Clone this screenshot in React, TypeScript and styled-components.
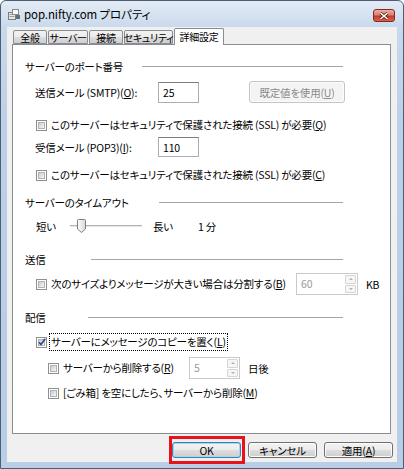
import styled, { createGlobalStyle } from "styled-components"

const GlobalStyle = createGlobalStyle`
  html, body {
    margin: 0;
    padding: 0;
    background: #ffffff;
  }
  body {
    font-family: "Noto Sans CJK JP", "Noto Sans", sans-serif;
    font-size: 10.5px;
    letter-spacing: -0.2px;
    font-feature-settings: "palt";
    color: #000;
  }
`

const Window = styled.div`
  width: 404px;
  height: 469px;
  box-sizing: border-box;
  border: 1px solid #4d5d74;
  border-radius: 6px 6px 0 0;
  background: linear-gradient(180deg, #e4ecf6 0px, #c9d9ec 26px, #bcd0e7 120px, #b8cde6 100%);
  display: flex;
  flex-direction: column;
  padding: 0 6px 6px 6px;
  overflow: hidden;
`

const TitleBar = styled.div`
  height: 26px;
  display: flex;
  align-items: center;
  padding-left: 1px;
`

const TitleIcon = styled.svg`
  width: 13px;
  height: 11px;
  flex-shrink: 0;
`

const TitleText = styled.span`
  margin-left: 3px;
  font-size: 11.5px;
  letter-spacing: -0.1px;
  color: #000;
  flex: 1;
`

const CloseButton = styled.div`
  align-self: flex-start;
  margin-top: 8px;
  margin-right: 2px;
  width: 22px;
  height: 13px;
  box-sizing: border-box;
  border: 1px solid #7b2c24;
  border-radius: 3px;
  background: linear-gradient(180deg, #eeaea2 0%, #dc7f70 45%, #c43b2a 55%, #d9634d 100%);
  display: flex;
  align-items: center;
  justify-content: center;
`

const Client = styled.div`
  flex: 1;
  background: #f0f0f0;
  display: flex;
  flex-direction: column;
  padding: 1px 5px 0 5px;
`

const TabStrip = styled.div`
  height: 17px;
  display: flex;
  align-items: flex-end;
  margin-left: 1px;
  margin-bottom: -1px;
  position: relative;
  z-index: 1;
`

const Tab = styled.div<{ $w: number; $active?: boolean }>`
  width: ${(p) => p.$w}px;
  box-sizing: border-box;
  height: ${(p) => (p.$active ? 17 : 14)}px;
  margin-bottom: ${(p) => (p.$active ? 0 : 1)}px;
  margin-right: ${(p) => (p.$active ? 0 : 1)}px;
  border: 1px solid #898c95;
  border-bottom: ${(p) => (p.$active ? "none" : "1px solid #898c95")};
  border-radius: 2px 2px 0 0;
  background: ${(p) =>
    p.$active ? "#ffffff" : "linear-gradient(180deg, #f2f2f2 0%, #ebebeb 50%, #dddddd 51%, #cfcfcf 100%)"};
  display: flex;
  align-items: center;
  justify-content: center;
  white-space: nowrap;
  font-size: 10px;
  letter-spacing: -0.3px;
  padding-bottom: ${(p) => (p.$active ? 1 : 0)}px;
`

const Panel = styled.div`
  width: 379px;
  height: 390px;
  box-sizing: border-box;
  border: 1px solid #898c95;
  background: #ffffff;
  padding: 14px 0 0 12px;
  display: flex;
  flex-direction: column;
`

const SectionHead = styled.div<{ $mt: number; $lineAt: number }>`
  margin-top: ${(p) => p.$mt}px;
  width: 318px;
  height: 14px;
  display: grid;
  grid-template-columns: ${(p) => p.$lineAt - 25}px 1fr;
  align-items: center;
`

const HeadLabel = styled.span`
  white-space: nowrap;
`

const Rule = styled.div`
  height: 1px;
  background: #a6a6a6;
  border-bottom: 1px solid #ffffff;
`

const Row = styled.div<{ $mt: number; $h: number; $indent: number }>`
  margin-top: ${(p) => p.$mt}px;
  height: ${(p) => p.$h}px;
  padding-left: ${(p) => p.$indent}px;
  display: flex;
  align-items: center;
  white-space: nowrap;
`

const FieldLabel = styled.span<{ $w: number }>`
  width: ${(p) => p.$w}px;
  flex-shrink: 0;
`

const TextBox = styled.div<{ $w: number; $h: number }>`
  width: ${(p) => p.$w}px;
  height: ${(p) => p.$h}px;
  box-sizing: border-box;
  border: 1px solid #abadb3;
  border-top-color: #7a7c82;
  background: #ffffff;
  padding-left: 4px;
  display: flex;
  align-items: center;
`

const PushButton = styled.div<{ $w: number; $h: number; $disabled?: boolean; $default?: boolean }>`
  width: ${(p) => p.$w}px;
  height: ${(p) => p.$h}px;
  box-sizing: border-box;
  border-radius: 3px;
  border: 1px solid ${(p) => (p.$disabled ? "#c2c4c6" : p.$default ? "#3c7fb1" : "#707070")};
  background: ${(p) =>
    p.$disabled
      ? "#f4f4f4"
      : "linear-gradient(180deg, #f3f3f3 0%, #ebebeb 50%, #dddddd 51%, #cfcfcf 100%)"};
  box-shadow: ${(p) => (p.$default ? "inset 0 0 0 1px #a8d3f1" : "inset 0 0 0 1px #fcfcfc")};
  color: ${(p) => (p.$disabled ? "#8a8a8a" : "#000")};
  display: flex;
  align-items: center;
  justify-content: center;
  flex-shrink: 0;
  position: relative;
`

const Highlight = styled.div`
  position: absolute;
  top: -7px;
  bottom: -7px;
  left: -4px;
  right: -5px;
  border: 3px solid #e8131a;
  pointer-events: none;
`

const CheckBox = styled.span`
  width: 11px;
  height: 11px;
  box-sizing: border-box;
  border: 1px solid #8e8f8f;
  padding: 1px;
  background: #ffffff;
  flex-shrink: 0;
  display: flex;
  position: relative;
`

const CheckFill = styled.span`
  flex: 1;
  background: linear-gradient(135deg, #c9cdd2 0%, #e4e6e8 60%, #f5f5f5 100%);
  border: 1px solid #b0b4b8;
  box-sizing: border-box;
`

const CheckMark = styled.svg`
  position: absolute;
  left: 0;
  top: -1px;
  width: 10px;
  height: 10px;
`

const CheckText = styled.span<{ $focus?: boolean }>`
  margin-left: 2px;
  padding: 0 1px;
  border: 1px dotted ${(p) => (p.$focus ? "#000" : "transparent")};
  line-height: 16px;
`

const FixedText = styled.span<{ $w: number; $ml?: number }>`
  width: ${(p) => p.$w}px;
  margin-left: ${(p) => p.$ml ?? 0}px;
  flex-shrink: 0;
`

const Spin = styled.div<{ $w: number }>`
  width: ${(p) => p.$w}px;
  height: 22px;
  box-sizing: border-box;
  border: 1px solid #c9cacc;
  background: #ffffff;
  display: flex;
  flex-shrink: 0;
`

const SpinValue = styled.span`
  flex: 1;
  color: #9a9a9a;
  padding-left: 4px;
  line-height: 20px;
`

const SpinButtons = styled.div`
  width: 11px;
  display: flex;
  flex-direction: column;
  gap: 1px;
  padding: 1px 1px 1px 0;
`

const SpinHalf = styled.div`
  flex: 1;
  border: 1px solid #d4d5d7;
  border-radius: 1px;
  background: #f6f6f6;
  display: flex;
  align-items: center;
  justify-content: center;
`

const Arrow = styled.span<{ $up?: boolean }>`
  width: 0;
  height: 0;
  border-left: 2px solid transparent;
  border-right: 2px solid transparent;
  ${(p) => (p.$up ? "border-bottom: 2px solid #b0b0b0;" : "border-top: 2px solid #b0b0b0;")}
`

const Unit = styled.span<{ $ml: number }>`
  margin-left: ${(p) => p.$ml}px;
`

const SliderTrack = styled.div`
  width: 72px;
  height: 16px;
  position: relative;
  flex-shrink: 0;
  &::before {
    content: "";
    position: absolute;
    left: 0;
    right: 0;
    top: 7px;
    height: 1px;
    background: #b3b3b3;
    border-bottom: 1px solid #e6e6e6;
  }
`

const Thumb = styled.svg`
  position: absolute;
  left: 7px;
  top: 1px;
  width: 9px;
  height: 14px;
`

const Footer = styled.div`
  margin-top: 8px;
  display: flex;
  justify-content: flex-end;
  gap: 7px;
  margin-right: -1px;
`

function Box({ checked }: { checked?: boolean }) {
  return (
    <CheckBox>
      <CheckFill />
      {checked && (
        <CheckMark viewBox="0 0 10 10">
          <path d="M2 5.2 L4 7.5 L8.2 1.8" fill="none" stroke="#2f4a8a" strokeWidth="1.7" />
        </CheckMark>
      )}
    </CheckBox>
  )
}

function SpinBox({ w, value }: { w: number; value: string }) {
  return (
    <Spin $w={w}>
      <SpinValue>{value}</SpinValue>
      <SpinButtons>
        <SpinHalf>
          <Arrow $up />
        </SpinHalf>
        <SpinHalf>
          <Arrow />
        </SpinHalf>
      </SpinButtons>
    </Spin>
  )
}

const tabs = [
  { label: "全般", w: 34 },
  { label: "サーバー", w: 40 },
  { label: "接続", w: 34 },
  { label: "セキュリティ", w: 49 },
  { label: "詳細設定", w: 50, active: true },
]

export default function App() {
  return (
    <>
      <GlobalStyle />
      <Window>
        <TitleBar>
          <TitleIcon viewBox="0 0 13 11">
            <rect x="0.5" y="3.5" width="7" height="7" fill="#e8e8e8" stroke="#7d7d7d" />
            <rect x="1.5" y="5" width="5" height="1" fill="#9a9a9a" />
            <rect x="1.5" y="7" width="5" height="1" fill="#9a9a9a" />
            <rect x="4.5" y="0.5" width="6" height="5" fill="#f8f8f8" stroke="#8a8a8a" />
            <rect x="8" y="6" width="4" height="4" fill="#5f6f84" />
          </TitleIcon>
          <TitleText>pop.nifty.com プロパティ</TitleText>
          <CloseButton>
            <svg width="10" height="8" viewBox="0 0 10 8">
              <path d="M1.5 1 L8.5 7 M8.5 1 L1.5 7" stroke="#5a1a14" strokeWidth="3" />
              <path d="M1.5 1 L8.5 7 M8.5 1 L1.5 7" stroke="#ffffff" strokeWidth="1.6" />
            </svg>
          </CloseButton>
        </TitleBar>

        <Client>
          <TabStrip>
            {tabs.map((t) => (
              <Tab key={t.label} $w={t.w} $active={t.active}>
                {t.label}
              </Tab>
            ))}
          </TabStrip>

          <Panel>
            <SectionHead $mt={0} $lineAt={142}>
              <HeadLabel>サーバーのポート番号</HeadLabel>
              <Rule />
            </SectionHead>

            <Row $mt={8} $h={22} $indent={10}>
              <FieldLabel $w={123}>
                送信メール (SMTP)(<u>O</u>):
              </FieldLabel>
              <TextBox $w={41} $h={21}>25</TextBox>
              <Unit $ml={50}>
                <PushButton $w={96} $h={22} $disabled>
                  既定値を使用(<u>U</u>)
                </PushButton>
              </Unit>
            </Row>

            <Row $mt={14} $h={16} $indent={11}>
              <Box />
              <CheckText>
                このサーバーはセキュリティで保護された接続 (SSL) が必要(<u>Q</u>)
              </CheckText>
            </Row>

            <Row $mt={4} $h={20} $indent={10}>
              <FieldLabel $w={123}>
                受信メール (POP3)(<u>I</u>):
              </FieldLabel>
              <TextBox $w={41} $h={20}>110</TextBox>
            </Row>

            <Row $mt={10} $h={16} $indent={11}>
              <Box />
              <CheckText>
                このサーバーはセキュリティで保護された接続 (SSL) が必要(<u>C</u>)
              </CheckText>
            </Row>

            <SectionHead $mt={12} $lineAt={159}>
              <HeadLabel>サーバーのタイムアウト</HeadLabel>
              <Rule />
            </SectionHead>

            <Row $mt={9} $h={16} $indent={11}>
              <FixedText $w={34}>短い</FixedText>
              <SliderTrack>
                <Thumb viewBox="0 0 9 14">
                  <defs>
                    <linearGradient id="thumbFill" x1="0" x2="1" y1="0" y2="0">
                      <stop offset="0" stopColor="#fdfdfd" />
                      <stop offset="1" stopColor="#d7d7d7" />
                    </linearGradient>
                  </defs>
                  <path
                    d="M1.5 0.5 H7.5 Q8.5 0.5 8.5 1.5 V10 L4.5 13.5 L0.5 10 V1.5 Q0.5 0.5 1.5 0.5 Z"
                    fill="url(#thumbFill)"
                    stroke="#7f7f7f"
                  />
                </Thumb>
              </SliderTrack>
              <FixedText $w={45} $ml={11}>
                長い
              </FixedText>
              <span>1 分</span>
            </Row>

            <SectionHead $mt={18} $lineAt={91}>
              <HeadLabel>送信</HeadLabel>
              <Rule />
            </SectionHead>

            <Row $mt={7} $h={22} $indent={11}>
              <Box />
              <FixedText $w={249}>
                <CheckText>
                  次のサイズよりメッセージが大きい場合は分割する(<u>B</u>)
                </CheckText>
              </FixedText>
              <SpinBox w={62} value="60" />
              <Unit $ml={8}>KB</Unit>
            </Row>

            <SectionHead $mt={15} $lineAt={88}>
              <HeadLabel>配信</HeadLabel>
              <Rule />
            </SectionHead>

            <Row $mt={9} $h={18} $indent={11}>
              <Box checked />
              <CheckText $focus>
                サーバーにメッセージのコピーを置く(<u>L</u>)
              </CheckText>
            </Row>

            <Row $mt={6} $h={22} $indent={23}>
              <Box />
              <FixedText $w={130}>
                <CheckText>
                  サーバーから削除する(<u>R</u>)
                </CheckText>
              </FixedText>
              <SpinBox w={51} value="5" />
              <Unit $ml={8}>日後</Unit>
            </Row>

            <Row $mt={6} $h={16} $indent={23}>
              <Box />
              <CheckText>
                [ごみ箱] を空にしたら、サーバーから削除(<u>M</u>)
              </CheckText>
            </Row>
          </Panel>

          <Footer>
            <PushButton $w={69} $h={16} $default>
              OK
              <Highlight />
            </PushButton>
            <PushButton $w={69} $h={16}>
              キャンセル
            </PushButton>
            <PushButton $w={69} $h={16}>
              適用(<u>A</u>)
            </PushButton>
          </Footer>
        </Client>
      </Window>
    </>
  )
}
